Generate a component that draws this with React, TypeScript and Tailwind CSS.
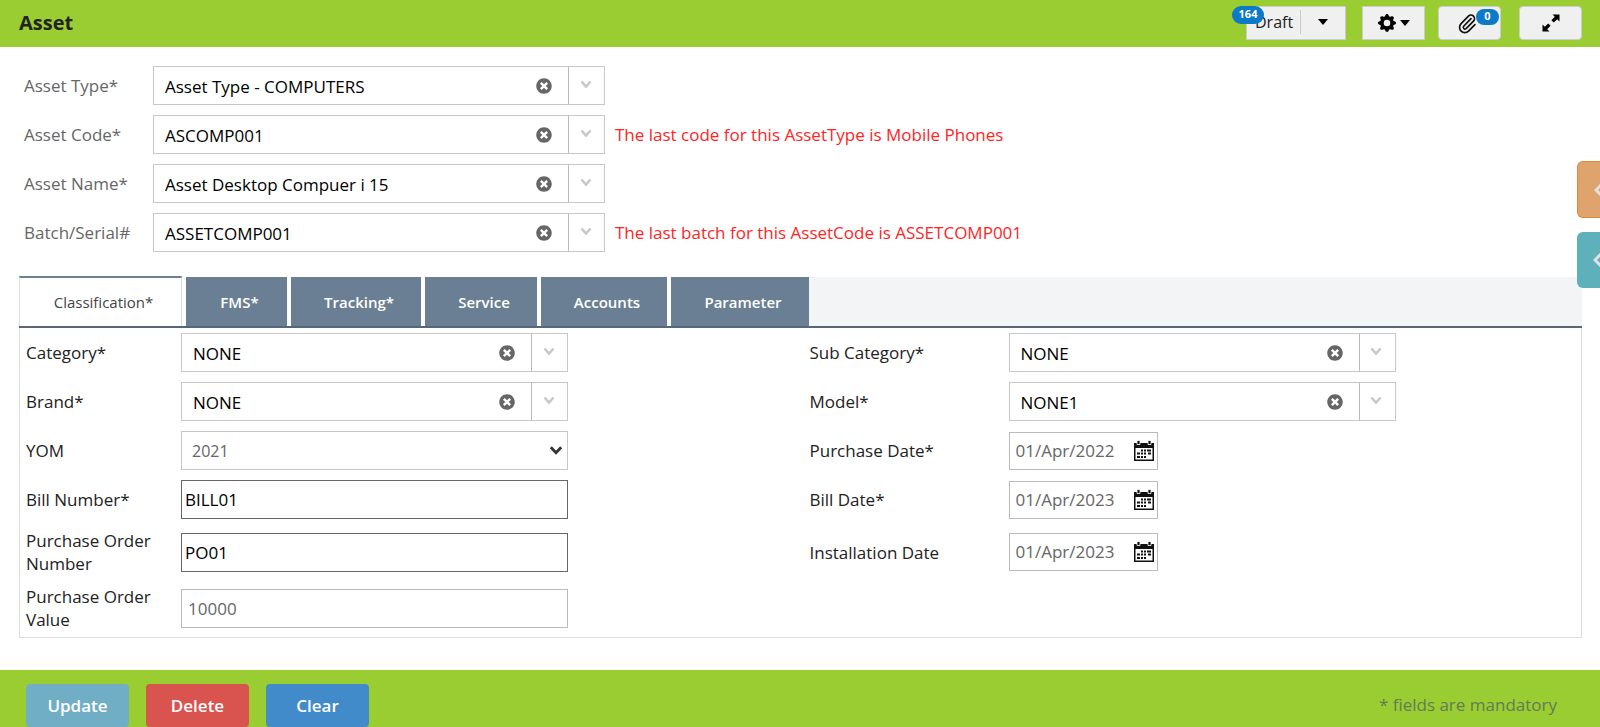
import React, { useState } from 'react';
import { FaTimesCircle } from 'react-icons/fa';
import { BsGearFill } from 'react-icons/bs';

const Caret = () => (
  <svg width="10" height="6" viewBox="0 0 10 6" aria-hidden="true">
    <path d="M0 0h10L5 6z" fill="#000" />
  </svg>
);

const Chevron = ({ dark = false }: { dark?: boolean }) => (
  <svg width="12" height="9" viewBox="0 0 12 9" fill="none" aria-hidden="true">
    <path
      d={dark ? 'M0.8 1.2 6 6.8l5.2-5.6' : 'M1.5 1.5 6 6.500l4.500-5'}
      stroke={dark ? '#333' : '#c8c8c8'}
      strokeWidth={dark ? 2.8 : 2.6}
    />
  </svg>
);

const Expand = () => (
  <svg width="18" height="18" viewBox="0 0 18 18" aria-hidden="true">
    <path d="M10.5 0.5h7v7l-2.3-2.3-3.4 3.4-2.4-2.4 3.4-3.4zM7.5 17.5h-7v-7l2.3 2.3 3.4-3.4 2.4 2.4-3.4 3.4z" fill="#000" />
  </svg>
);

const Clip = () => (
  <svg width="21" height="21" viewBox="0 0 24 24" fill="none" stroke="#111" strokeWidth="1.9" strokeLinecap="round" strokeLinejoin="round" aria-hidden="true">
    <path d="m16 6.5-8.4 8.6a2 2 0 0 0 2.8 2.8l8.4-8.6a4 4 0 1 0-5.7-5.7L4.7 12.2a6 6 0 1 0 8.5 8.5l7.3-7.5" />
  </svg>
);

const Calendar = () => (
  <svg width="20" height="22" viewBox="0 0 20 22" aria-hidden="true">
    <path d="M0 3h20v18H0zM1.5 8v11.5h17V8z" fill="#111" fillRule="evenodd" />
    <path d="M3 0.5h3v4H3zM14 0.5h3v4h-3z" fill="#111" stroke="#fff" strokeWidth="0.8" />
    <path
      d="M7 9.5h2v2H7zM10 9.5h2v2h-2zM13 9.5h4v2h-4zM3 12.5h3v2H3zM7 12.5h2v2H7zM10 12.5h2v2h-2zM14 12.5h3v2h-3zM3 16h3v2H3zM7 16h2v2H7zM10 16h2v2h-2z"
      fill="#111"
    />
  </svg>
);

function Combo({ id, value: initial }: { id: string; value: string }) {
  const [value, setValue] = useState(initial);
  return (
    <div className="flex h-[39px] w-full border border-[#c8c8c8] bg-white">
      <input
        id={id}
        value={value}
        onChange={(e) => setValue(e.target.value)}
        className="min-w-0 flex-1 bg-transparent pt-0.5 pl-[11px] text-black outline-none"
      />
      <button type="button" aria-label="Clear value" onClick={() => setValue('')} className="flex w-12 items-center justify-center pt-px text-[#666]">
        <FaTimesCircle size={16} />
      </button>
      <button type="button" aria-label="Show options" className="flex w-9 items-center justify-center border-l border-[#bbb] pr-0.5 pb-0.5">
        <Chevron />
      </button>
    </div>
  );
}

function TopField({ id, label, value, note }: { id: string; label: string; value: string; note?: string }) {
  return (
    <div className="flex items-center">
      <label htmlFor={id} className="w-[129px] shrink-0 text-[#666]">{label}</label>
      <div className="w-[452px] shrink-0">
        <Combo id={id} value={value} />
      </div>
      {note && <p className="ml-2.5 text-[#ff2525]">{note}</p>}
    </div>
  );
}

function LeftField({ id, label, children }: { id: string; label: string; children: React.ReactNode }) {
  return (
    <div className="flex items-center pl-1.5">
      <label htmlFor={id} className="w-[155px] shrink-0 pr-5 leading-[23px] text-[#222]">{label}</label>
      <div className="w-[387px]">{children}</div>
    </div>
  );
}

function RightField({ id, label, children }: { id: string; label: string; children: React.ReactNode }) {
  return (
    <div className="flex items-center pl-[9px]">
      <label htmlFor={id} className="w-[199px] shrink-0 leading-[23px] text-[#222]">{label}</label>
      <div className="w-[387px]">{children}</div>
    </div>
  );
}

function DateInput({ id, value }: { id: string; value: string }) {
  return (
    <div className="flex h-[38px] w-[149px] items-center border border-[#bbb]">
      <input id={id} defaultValue={value} className="min-w-0 flex-1 bg-transparent pl-1.5 text-[#666] outline-none" />
      <button type="button" aria-label="Pick a date" className="mr-[3px]">
        <Calendar />
      </button>
    </div>
  );
}

const tabs = [
  { name: 'FMS*', width: 'w-[101px]' },
  { name: 'Tracking*', width: 'w-[130px]' },
  { name: 'Service', width: 'w-[112px]' },
  { name: 'Accounts', width: 'w-[126px]' },
  { name: 'Parameter', width: 'w-[138px]' },
];

export default function App() {
  return (
    <div className="relative flex min-h-screen flex-col overflow-hidden bg-white font-['Open_Sans',sans-serif] text-[17px]">
      <header className="flex h-[47px] items-center justify-between bg-[#9acd32] pr-[18px] pb-0.5 pl-[19px]">
        <h1 className="text-[20px] font-bold text-[#222]">Asset</h1>
        <div className="flex items-center">
          <div className="relative mr-4">
            <button type="button" className="flex h-[34px] w-[100px] items-center border border-[#ccc] bg-[#f0f0f0] pb-0.5 pl-2 text-[16px] text-[#222]">
              <span className="w-[45px] text-left">Draft</span>
              <span className="flex h-6 flex-1 items-center justify-center border-l border-[#ccc]">
                <Caret />
              </span>
            </button>
            <span className="absolute top-0 -left-3.5 flex h-[18px] w-8 items-center justify-center rounded-full bg-[#0d7ac9] text-[11px] font-bold text-white">164</span>
          </div>
          <button type="button" aria-label="Settings" className="mr-[13px] flex h-[34px] w-[63px] items-center justify-center gap-1 border border-[#ccc] bg-[#f0f0f0]">
            <BsGearFill size={18} />
            <Caret />
          </button>
          <div className="relative mr-[18px]">
            <button type="button" aria-label="Attachments" className="flex h-[34px] w-[63px] items-center justify-center rounded border border-[#ccc] bg-[#f0f0f0] pt-0.5 pr-1">
              <Clip />
            </button>
            <span className="absolute top-[3px] right-0.5 flex h-4 w-[23px] items-center justify-center rounded-full bg-[#0d7ac9] text-[11px] font-bold text-white">0</span>
          </div>
          <button type="button" aria-label="Full screen" className="flex h-[34px] w-[63px] items-center justify-center rounded border border-[#ccc] bg-[#f0f0f0]">
            <Expand />
          </button>
        </div>
      </header>

      <main className="flex-1 pb-8">
        <section className="flex flex-col gap-2.5 pt-[19px] pl-6">
          <TopField id="asset-type" label="Asset Type*" value="Asset Type - COMPUTERS" />
          <TopField id="asset-code" label="Asset Code*" value="ASCOMP001" note="The last code for this AssetType is Mobile Phones" />
          <TopField id="asset-name" label="Asset Name*" value="Asset Desktop Compuer i 15" />
          <TopField id="batch" label="Batch/Serial#" value="ASSETCOMP001" note="The last batch for this AssetCode is ASSETCOMP001" />
        </section>

        <div className="mt-6 mr-[18px] ml-[19px]">
          <div role="tablist" className="flex h-[52px] items-end border-b-2 border-[#56677a] text-[15px]">
            <div className="flex h-full gap-1">
              <button type="button" role="tab" aria-selected="true" className="w-[163px] border border-t-2 border-b-0 border-[#ddd] border-t-[#6a7f93] pl-1.5 text-[#444]">
                Classification*
              </button>
              {tabs.map((t) => (
                <button key={t.name} type="button" role="tab" aria-selected="false" className={`${t.width} mt-px bg-[#6a7f93] pt-px pl-1.5 font-semibold text-white`}>
                  {t.name}
                </button>
              ))}
            </div>
            <div className="h-[49px] flex-1 bg-[#f2f4f6]" />
          </div>

          <form className="grid grid-cols-2 gap-y-2.5 border border-t-0 border-[#ddd] pt-[5px] pb-1.5" onSubmit={(e) => e.preventDefault()}>
            <LeftField id="category" label="Category*"><Combo id="category" value="NONE" /></LeftField>
            <RightField id="sub-category" label="Sub Category*"><Combo id="sub-category" value="NONE" /></RightField>
            <LeftField id="brand" label="Brand*"><Combo id="brand" value="NONE" /></LeftField>
            <RightField id="model" label="Model*"><Combo id="model" value="NONE1" /></RightField>
            <LeftField id="yom" label="YOM">
              <div className="relative">
                <select id="yom" className="h-[39px] w-full appearance-none border border-[#c8c8c8] bg-white pl-2.5 text-[16px] text-[#666] outline-none">
                  <option>2021</option>
                </select>
                <span className="pointer-events-none absolute inset-y-0 right-1.5 flex items-center"><Chevron dark /></span>
              </div>
            </LeftField>
            <RightField id="purchase-date" label="Purchase Date*"><DateInput id="purchase-date" value="01/Apr/2022" /></RightField>
            <LeftField id="bill-number" label="Bill Number*">
              <input id="bill-number" defaultValue="BILL01" className="h-[39px] w-full border border-[#666] px-[3px] text-black outline-none" />
            </LeftField>
            <RightField id="bill-date" label="Bill Date*"><DateInput id="bill-date" value="01/Apr/2023" /></RightField>
            <LeftField id="po-number" label="Purchase Order Number">
              <input id="po-number" defaultValue="PO01" className="h-[39px] w-full border border-[#666] px-[3px] text-black outline-none" />
            </LeftField>
            <RightField id="installation-date" label="Installation Date"><DateInput id="installation-date" value="01/Apr/2023" /></RightField>
            <LeftField id="po-value" label="Purchase Order Value">
              <input id="po-value" defaultValue="10000" className="h-[39px] w-full border border-[#bbb] px-1.5 text-[#666] outline-none" />
            </LeftField>
          </form>
        </div>
      </main>

      <footer className="flex items-start justify-between bg-[#9acd32] pt-3.5 pr-[43px] pl-[26px]">
        <div className="flex gap-[17px] text-[17px] font-semibold text-white">
          <button type="button" className="h-[43px] w-[103px] rounded bg-[#6faec5]">Update</button>
          <button type="button" className="h-[43px] w-[103px] rounded bg-[#d9534f]">Delete</button>
          <button type="button" className="h-[43px] w-[103px] rounded bg-[#428bca]">Clear</button>
        </div>
        <p className="pt-2 text-[#667a55]">* fields are mandatory</p>
      </footer>

      <div className="absolute top-[161px] right-0 flex flex-col gap-3.5">
        <button type="button" aria-label="Open first side panel" className="h-[57px] w-[23px] overflow-hidden rounded-l-md border border-r-0 border-[#e0883a] bg-[#dfa36d] pl-4">
          <svg width="12" height="14" viewBox="0 0 12 14" fill="none"><path d="M8 1 2 7l6 6" stroke="#e2e2e2" strokeWidth="3" /></svg>
        </button>
        <button type="button" aria-label="Open second side panel" className="h-[56px] w-[23px] overflow-hidden rounded-l-md bg-[#5eb0ba] pl-4">
          <svg width="12" height="14" viewBox="0 0 12 14" fill="none"><path d="M8 1 2 7l6 6" stroke="#e2e2e2" strokeWidth="3" /></svg>
        </button>
      </div>
    </div>
  );
}
